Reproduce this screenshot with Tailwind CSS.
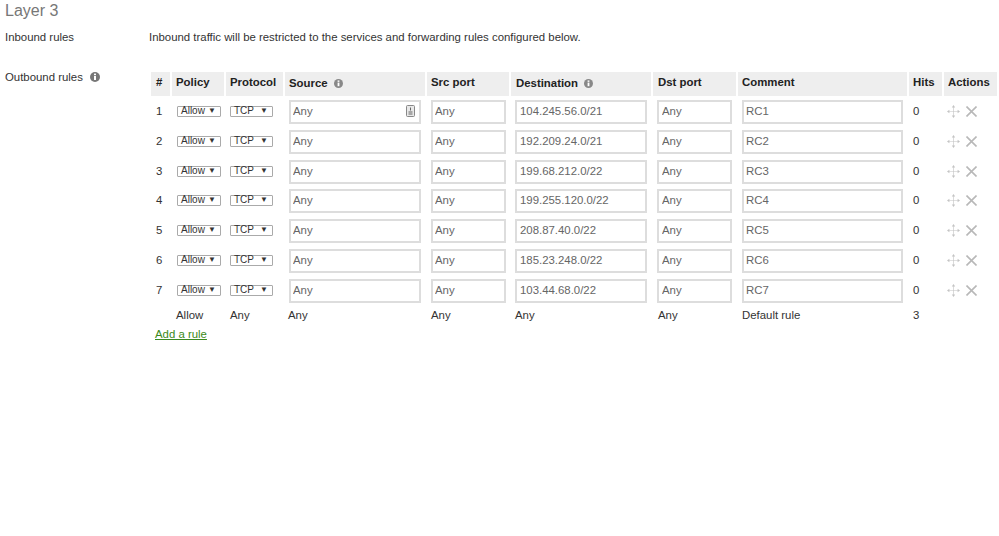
<!DOCTYPE html>
<html><head><meta charset="utf-8">
<script src="https://cdn.jsdelivr.net/npm/@tailwindcss/browser@4"></script>
</head>
<body class="bg-white font-['Liberation_Sans',Arial,sans-serif] text-[11.4px] text-[#333] overflow-hidden">
<div class="w-[999px] h-[536px] relative">
  <h2 class="text-[16px] leading-[20px] text-[#777] pl-[5px] pt-[1px]">Layer 3</h2>
  <div class="flex pl-[5px] mt-[6px] leading-[20px]">
    <div class="w-[144px]">Inbound rules</div>
    <div>Inbound traffic will be restricted to the services and forwarding rules configured below.</div>
  </div>
  <div class="flex pl-[5px] mt-[20px]">
    <div class="w-[146px] flex items-start gap-[7px] leading-[20px]">Outbound rules
      <svg class="mt-[5px]" width="10" height="10" viewBox="0 0 10 10"><circle cx="5" cy="5" r="5" fill="#777"/><rect x="4" y="4" width="2" height="4" fill="#fff"/><rect x="4" y="1.6" width="2" height="1.6" fill="#fff"/></svg>
    </div>
    <div class="w-[846px] pt-[5px]">
      <div class="grid grid-cols-[19px_52px_57px_140px_82px_140px_83px_169px_33px_53px] gap-x-[2px] h-[24px] font-bold text-[#222] leading-[21px]">
        <div class="bg-[#eeeeee] pl-[5px]">#</div>
        <div class="bg-[#eeeeee] pl-[4px]">Policy</div>
        <div class="bg-[#eeeeee] pl-[4px]">Protocol</div>
        <div class="bg-[#eeeeee] pl-[4px] flex items-center gap-[6px] pb-[1px]">Source <svg width="9" height="9" viewBox="0 0 10 10"><circle cx="5" cy="5" r="5" fill="#888"/><rect x="4" y="4" width="2" height="4" fill="#fff"/><rect x="4" y="1.6" width="2" height="1.6" fill="#fff"/></svg></div>
        <div class="bg-[#eeeeee] pl-[4px]">Src port</div>
        <div class="bg-[#eeeeee] pl-[5px] flex items-center gap-[6px] pb-[1px]">Destination <svg width="9" height="9" viewBox="0 0 10 10"><circle cx="5" cy="5" r="5" fill="#888"/><rect x="4" y="4" width="2" height="4" fill="#fff"/><rect x="4" y="1.6" width="2" height="1.6" fill="#fff"/></svg></div>
        <div class="bg-[#eeeeee] pl-[5px]">Dst port</div>
        <div class="bg-[#eeeeee] pl-[4px]">Comment</div>
        <div class="bg-[#eeeeee] pl-[4px]">Hits</div>
        <div class="bg-[#eeeeee] pl-[4px]">Actions</div>
      </div>

      <div class="grid grid-cols-[19px_52px_57px_140px_82px_140px_83px_169px_33px_53px] gap-x-[2px] auto-rows-[29.75px] pt-[4px] items-start">
        <div class="pl-[5px] leading-[22px]">1</div>
        <div class="pl-[5px] pt-[6px]"><div class="w-[44px] h-[11px] border border-[#aaa] rounded-[1px] text-[10px] leading-[8px] pl-[3px] flex justify-between pr-[4px]"><span>Allow</span><span class="text-[8px]">▼</span></div></div>
        <div class="pl-[4px] pt-[6px]"><div class="w-[43px] h-[11px] border border-[#aaa] rounded-[1px] text-[10px] leading-[8px] pl-[3px] flex justify-between pr-[4px]"><span>TCP</span><span class="text-[8px]">▼</span></div></div>
        <div class="pl-[4px] relative"><input value="Any" class="w-[132px] h-[24px] border-2 border-[#ddd] pl-[2px] pb-[2px] text-[#666] outline-none"><svg class="absolute left-[121px] top-[5px]" width="9" height="12" viewBox="0 0 9 12"><rect x=".5" y=".5" width="8" height="11" rx="1" fill="#e8e8e8" stroke="#888"/><path d="M4.5 2.5v3M2.5 7h4M2.5 9h4" stroke="#666" fill="none"/></svg></div>
        <div class="pl-[4px]"><input value="Any" class="w-[75px] h-[24px] border-2 border-[#ddd] pl-[2px] pb-[2px] text-[#666] outline-none"></div>
        <div class="pl-[4px]"><input value="104.245.56.0/21" class="w-[132px] h-[24px] border-2 border-[#ddd] pl-[3px] pb-[2px] text-[#666] outline-none"></div>
        <div class="pl-[4px]"><input value="Any" class="w-[75px] h-[24px] border-2 border-[#ddd] pl-[3px] pb-[2px] text-[#666] outline-none"></div>
        <div class="pl-[4px]"><input value="RC1" class="w-[161px] h-[24px] border-2 border-[#ddd] pl-[2px] pb-[2px] text-[#666] outline-none"></div>
        <div class="pl-[4px] leading-[22px]">0</div>
        <div class="pl-[3px] pt-[5px] flex gap-[6px] items-start"><svg width="13" height="13" viewBox="0 0 13 13" fill="#c4c4c4" stroke="none"><path d="M6.2 2h.6v9h-.6zM2 6.2h9v.6H2z"/><path d="M6.5 0 8.2 2.4H4.8zM6.5 13 4.8 10.6h3.4zM0 6.5 2.4 4.8v3.4zM13 6.5 10.6 8.2V4.8z"/></svg><svg class="mt-[1px]" width="11" height="11" viewBox="0 0 11 11" fill="none" stroke="#b8b8b8" stroke-width="1.6"><path d="M.5.5l10 10M10.5.5l-10 10"/></svg></div>

        <div class="pl-[5px] leading-[22px]">2</div>
        <div class="pl-[5px] pt-[6px]"><div class="w-[44px] h-[11px] border border-[#aaa] rounded-[1px] text-[10px] leading-[8px] pl-[3px] flex justify-between pr-[4px]"><span>Allow</span><span class="text-[8px]">▼</span></div></div>
        <div class="pl-[4px] pt-[6px]"><div class="w-[43px] h-[11px] border border-[#aaa] rounded-[1px] text-[10px] leading-[8px] pl-[3px] flex justify-between pr-[4px]"><span>TCP</span><span class="text-[8px]">▼</span></div></div>
        <div class="pl-[4px]"><input value="Any" class="w-[132px] h-[24px] border-2 border-[#ddd] pl-[2px] pb-[2px] text-[#666] outline-none"></div>
        <div class="pl-[4px]"><input value="Any" class="w-[75px] h-[24px] border-2 border-[#ddd] pl-[2px] pb-[2px] text-[#666] outline-none"></div>
        <div class="pl-[4px]"><input value="192.209.24.0/21" class="w-[132px] h-[24px] border-2 border-[#ddd] pl-[3px] pb-[2px] text-[#666] outline-none"></div>
        <div class="pl-[4px]"><input value="Any" class="w-[75px] h-[24px] border-2 border-[#ddd] pl-[3px] pb-[2px] text-[#666] outline-none"></div>
        <div class="pl-[4px]"><input value="RC2" class="w-[161px] h-[24px] border-2 border-[#ddd] pl-[2px] pb-[2px] text-[#666] outline-none"></div>
        <div class="pl-[4px] leading-[22px]">0</div>
        <div class="pl-[3px] pt-[5px] flex gap-[6px] items-start"><svg width="13" height="13" viewBox="0 0 13 13" fill="#c4c4c4" stroke="none"><path d="M6.2 2h.6v9h-.6zM2 6.2h9v.6H2z"/><path d="M6.5 0 8.2 2.4H4.8zM6.5 13 4.8 10.6h3.4zM0 6.5 2.4 4.8v3.4zM13 6.5 10.6 8.2V4.8z"/></svg><svg class="mt-[1px]" width="11" height="11" viewBox="0 0 11 11" fill="none" stroke="#b8b8b8" stroke-width="1.6"><path d="M.5.5l10 10M10.5.5l-10 10"/></svg></div>

        <div class="pl-[5px] leading-[22px]">3</div>
        <div class="pl-[5px] pt-[6px]"><div class="w-[44px] h-[11px] border border-[#aaa] rounded-[1px] text-[10px] leading-[8px] pl-[3px] flex justify-between pr-[4px]"><span>Allow</span><span class="text-[8px]">▼</span></div></div>
        <div class="pl-[4px] pt-[6px]"><div class="w-[43px] h-[11px] border border-[#aaa] rounded-[1px] text-[10px] leading-[8px] pl-[3px] flex justify-between pr-[4px]"><span>TCP</span><span class="text-[8px]">▼</span></div></div>
        <div class="pl-[4px]"><input value="Any" class="w-[132px] h-[24px] border-2 border-[#ddd] pl-[2px] pb-[2px] text-[#666] outline-none"></div>
        <div class="pl-[4px]"><input value="Any" class="w-[75px] h-[24px] border-2 border-[#ddd] pl-[2px] pb-[2px] text-[#666] outline-none"></div>
        <div class="pl-[4px]"><input value="199.68.212.0/22" class="w-[132px] h-[24px] border-2 border-[#ddd] pl-[3px] pb-[2px] text-[#666] outline-none"></div>
        <div class="pl-[4px]"><input value="Any" class="w-[75px] h-[24px] border-2 border-[#ddd] pl-[3px] pb-[2px] text-[#666] outline-none"></div>
        <div class="pl-[4px]"><input value="RC3" class="w-[161px] h-[24px] border-2 border-[#ddd] pl-[2px] pb-[2px] text-[#666] outline-none"></div>
        <div class="pl-[4px] leading-[22px]">0</div>
        <div class="pl-[3px] pt-[5px] flex gap-[6px] items-start"><svg width="13" height="13" viewBox="0 0 13 13" fill="#c4c4c4" stroke="none"><path d="M6.2 2h.6v9h-.6zM2 6.2h9v.6H2z"/><path d="M6.5 0 8.2 2.4H4.8zM6.5 13 4.8 10.6h3.4zM0 6.5 2.4 4.8v3.4zM13 6.5 10.6 8.2V4.8z"/></svg><svg class="mt-[1px]" width="11" height="11" viewBox="0 0 11 11" fill="none" stroke="#b8b8b8" stroke-width="1.6"><path d="M.5.5l10 10M10.5.5l-10 10"/></svg></div>

        <div class="pl-[5px] leading-[22px]">4</div>
        <div class="pl-[5px] pt-[6px]"><div class="w-[44px] h-[11px] border border-[#aaa] rounded-[1px] text-[10px] leading-[8px] pl-[3px] flex justify-between pr-[4px]"><span>Allow</span><span class="text-[8px]">▼</span></div></div>
        <div class="pl-[4px] pt-[6px]"><div class="w-[43px] h-[11px] border border-[#aaa] rounded-[1px] text-[10px] leading-[8px] pl-[3px] flex justify-between pr-[4px]"><span>TCP</span><span class="text-[8px]">▼</span></div></div>
        <div class="pl-[4px]"><input value="Any" class="w-[132px] h-[24px] border-2 border-[#ddd] pl-[2px] pb-[2px] text-[#666] outline-none"></div>
        <div class="pl-[4px]"><input value="Any" class="w-[75px] h-[24px] border-2 border-[#ddd] pl-[2px] pb-[2px] text-[#666] outline-none"></div>
        <div class="pl-[4px]"><input value="199.255.120.0/22" class="w-[132px] h-[24px] border-2 border-[#ddd] pl-[3px] pb-[2px] text-[#666] outline-none"></div>
        <div class="pl-[4px]"><input value="Any" class="w-[75px] h-[24px] border-2 border-[#ddd] pl-[3px] pb-[2px] text-[#666] outline-none"></div>
        <div class="pl-[4px]"><input value="RC4" class="w-[161px] h-[24px] border-2 border-[#ddd] pl-[2px] pb-[2px] text-[#666] outline-none"></div>
        <div class="pl-[4px] leading-[22px]">0</div>
        <div class="pl-[3px] pt-[5px] flex gap-[6px] items-start"><svg width="13" height="13" viewBox="0 0 13 13" fill="#c4c4c4" stroke="none"><path d="M6.2 2h.6v9h-.6zM2 6.2h9v.6H2z"/><path d="M6.5 0 8.2 2.4H4.8zM6.5 13 4.8 10.6h3.4zM0 6.5 2.4 4.8v3.4zM13 6.5 10.6 8.2V4.8z"/></svg><svg class="mt-[1px]" width="11" height="11" viewBox="0 0 11 11" fill="none" stroke="#b8b8b8" stroke-width="1.6"><path d="M.5.5l10 10M10.5.5l-10 10"/></svg></div>

        <div class="pl-[5px] leading-[22px]">5</div>
        <div class="pl-[5px] pt-[6px]"><div class="w-[44px] h-[11px] border border-[#aaa] rounded-[1px] text-[10px] leading-[8px] pl-[3px] flex justify-between pr-[4px]"><span>Allow</span><span class="text-[8px]">▼</span></div></div>
        <div class="pl-[4px] pt-[6px]"><div class="w-[43px] h-[11px] border border-[#aaa] rounded-[1px] text-[10px] leading-[8px] pl-[3px] flex justify-between pr-[4px]"><span>TCP</span><span class="text-[8px]">▼</span></div></div>
        <div class="pl-[4px]"><input value="Any" class="w-[132px] h-[24px] border-2 border-[#ddd] pl-[2px] pb-[2px] text-[#666] outline-none"></div>
        <div class="pl-[4px]"><input value="Any" class="w-[75px] h-[24px] border-2 border-[#ddd] pl-[2px] pb-[2px] text-[#666] outline-none"></div>
        <div class="pl-[4px]"><input value="208.87.40.0/22" class="w-[132px] h-[24px] border-2 border-[#ddd] pl-[3px] pb-[2px] text-[#666] outline-none"></div>
        <div class="pl-[4px]"><input value="Any" class="w-[75px] h-[24px] border-2 border-[#ddd] pl-[3px] pb-[2px] text-[#666] outline-none"></div>
        <div class="pl-[4px]"><input value="RC5" class="w-[161px] h-[24px] border-2 border-[#ddd] pl-[2px] pb-[2px] text-[#666] outline-none"></div>
        <div class="pl-[4px] leading-[22px]">0</div>
        <div class="pl-[3px] pt-[5px] flex gap-[6px] items-start"><svg width="13" height="13" viewBox="0 0 13 13" fill="#c4c4c4" stroke="none"><path d="M6.2 2h.6v9h-.6zM2 6.2h9v.6H2z"/><path d="M6.5 0 8.2 2.4H4.8zM6.5 13 4.8 10.6h3.4zM0 6.5 2.4 4.8v3.4zM13 6.5 10.6 8.2V4.8z"/></svg><svg class="mt-[1px]" width="11" height="11" viewBox="0 0 11 11" fill="none" stroke="#b8b8b8" stroke-width="1.6"><path d="M.5.5l10 10M10.5.5l-10 10"/></svg></div>

        <div class="pl-[5px] leading-[22px]">6</div>
        <div class="pl-[5px] pt-[6px]"><div class="w-[44px] h-[11px] border border-[#aaa] rounded-[1px] text-[10px] leading-[8px] pl-[3px] flex justify-between pr-[4px]"><span>Allow</span><span class="text-[8px]">▼</span></div></div>
        <div class="pl-[4px] pt-[6px]"><div class="w-[43px] h-[11px] border border-[#aaa] rounded-[1px] text-[10px] leading-[8px] pl-[3px] flex justify-between pr-[4px]"><span>TCP</span><span class="text-[8px]">▼</span></div></div>
        <div class="pl-[4px]"><input value="Any" class="w-[132px] h-[24px] border-2 border-[#ddd] pl-[2px] pb-[2px] text-[#666] outline-none"></div>
        <div class="pl-[4px]"><input value="Any" class="w-[75px] h-[24px] border-2 border-[#ddd] pl-[2px] pb-[2px] text-[#666] outline-none"></div>
        <div class="pl-[4px]"><input value="185.23.248.0/22" class="w-[132px] h-[24px] border-2 border-[#ddd] pl-[3px] pb-[2px] text-[#666] outline-none"></div>
        <div class="pl-[4px]"><input value="Any" class="w-[75px] h-[24px] border-2 border-[#ddd] pl-[3px] pb-[2px] text-[#666] outline-none"></div>
        <div class="pl-[4px]"><input value="RC6" class="w-[161px] h-[24px] border-2 border-[#ddd] pl-[2px] pb-[2px] text-[#666] outline-none"></div>
        <div class="pl-[4px] leading-[22px]">0</div>
        <div class="pl-[3px] pt-[5px] flex gap-[6px] items-start"><svg width="13" height="13" viewBox="0 0 13 13" fill="#c4c4c4" stroke="none"><path d="M6.2 2h.6v9h-.6zM2 6.2h9v.6H2z"/><path d="M6.5 0 8.2 2.4H4.8zM6.5 13 4.8 10.6h3.4zM0 6.5 2.4 4.8v3.4zM13 6.5 10.6 8.2V4.8z"/></svg><svg class="mt-[1px]" width="11" height="11" viewBox="0 0 11 11" fill="none" stroke="#b8b8b8" stroke-width="1.6"><path d="M.5.5l10 10M10.5.5l-10 10"/></svg></div>

        <div class="pl-[5px] leading-[22px]">7</div>
        <div class="pl-[5px] pt-[6px]"><div class="w-[44px] h-[11px] border border-[#aaa] rounded-[1px] text-[10px] leading-[8px] pl-[3px] flex justify-between pr-[4px]"><span>Allow</span><span class="text-[8px]">▼</span></div></div>
        <div class="pl-[4px] pt-[6px]"><div class="w-[43px] h-[11px] border border-[#aaa] rounded-[1px] text-[10px] leading-[8px] pl-[3px] flex justify-between pr-[4px]"><span>TCP</span><span class="text-[8px]">▼</span></div></div>
        <div class="pl-[4px]"><input value="Any" class="w-[132px] h-[24px] border-2 border-[#ddd] pl-[2px] pb-[2px] text-[#666] outline-none"></div>
        <div class="pl-[4px]"><input value="Any" class="w-[75px] h-[24px] border-2 border-[#ddd] pl-[2px] pb-[2px] text-[#666] outline-none"></div>
        <div class="pl-[4px]"><input value="103.44.68.0/22" class="w-[132px] h-[24px] border-2 border-[#ddd] pl-[3px] pb-[2px] text-[#666] outline-none"></div>
        <div class="pl-[4px]"><input value="Any" class="w-[75px] h-[24px] border-2 border-[#ddd] pl-[3px] pb-[2px] text-[#666] outline-none"></div>
        <div class="pl-[4px]"><input value="RC7" class="w-[161px] h-[24px] border-2 border-[#ddd] pl-[2px] pb-[2px] text-[#666] outline-none"></div>
        <div class="pl-[4px] leading-[22px]">0</div>
        <div class="pl-[3px] pt-[5px] flex gap-[6px] items-start"><svg width="13" height="13" viewBox="0 0 13 13" fill="#c4c4c4" stroke="none"><path d="M6.2 2h.6v9h-.6zM2 6.2h9v.6H2z"/><path d="M6.5 0 8.2 2.4H4.8zM6.5 13 4.8 10.6h3.4zM0 6.5 2.4 4.8v3.4zM13 6.5 10.6 8.2V4.8z"/></svg><svg class="mt-[1px]" width="11" height="11" viewBox="0 0 11 11" fill="none" stroke="#b8b8b8" stroke-width="1.6"><path d="M.5.5l10 10M10.5.5l-10 10"/></svg></div>
      </div>

      <div class="grid grid-cols-[19px_52px_57px_140px_82px_140px_83px_169px_33px_53px] gap-x-[2px] leading-[20px] -mt-[3px]">
        <div></div>
        <div class="pl-[4px]">Allow</div>
        <div class="pl-[4px]">Any</div>
        <div class="pl-[3px]">Any</div>
        <div class="pl-[4px]">Any</div>
        <div class="pl-[4px]">Any</div>
        <div class="pl-[5px]">Any</div>
        <div class="pl-[4px]">Default rule</div>
        <div class="pl-[4px]">3</div>
        <div></div>
      </div>
      <a href="#" class="block pl-[4px] leading-[18px] text-[#3a8a20] underline">Add a rule</a>
    </div>
  </div>
</div>
</body></html>
